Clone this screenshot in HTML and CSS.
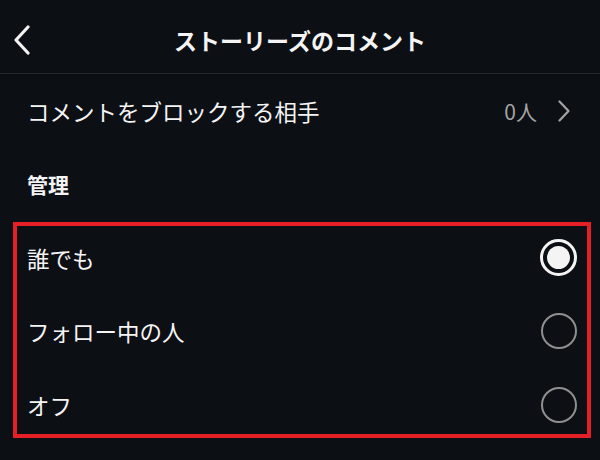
FILE: index.html
```html
<!DOCTYPE html>
<html lang="ja">
<head>
<meta charset="utf-8">
<link rel="stylesheet" href="styles.css">
</head>
<body>
<div class="screen">
  <header class="topbar">
    <span class="back">
      <svg width="20" height="30" viewBox="0 0 20 30"><path d="M16 2 L4 15 L16 28" fill="none" stroke="#f2f2f2" stroke-width="3.2" stroke-linecap="round" stroke-linejoin="round"/></svg>
    </span>
    <h1 class="title">ストーリーズのコメント</h1>
  </header>
  <div class="row">
    <span class="label">コメントをブロックする相手</span>
    <span class="value">0人
      <svg class="chev" width="14" height="22" viewBox="0 0 14 22"><path d="M2.5 1.5 L11.5 11 L2.5 20.5" fill="none" stroke="#a3a3a3" stroke-width="2.2" stroke-linecap="round" stroke-linejoin="round"/></svg>
    </span>
  </div>
  <div class="row section">管理</div>
  <div class="options">
    <div class="row">
      <span class="label">誰でも</span>
      <span class="radio selected"><span class="dot"></span></span>
    </div>
    <div class="row">
      <span class="label">フォロー中の人</span>
      <span class="radio"></span>
    </div>
    <div class="row">
      <span class="label">オフ</span>
      <span class="radio"></span>
    </div>
  </div>
</div>
</body>
</html>
```

FILE: styles.css
```css
html, body {
  margin: 0;
  padding: 0;
  background: #0c0f14;
}
body {
  width: 600px;
  height: 460px;
  overflow: hidden;
  font-family: "Noto Sans CJK JP", "Noto Sans", sans-serif;
  color: #f4f4f4;
}
.topbar {
  height: 73px;
  border-bottom: 1px solid #23262c;
  display: flex;
  align-items: center;
  justify-content: center;
  position: relative;
}
.back {
  position: absolute;
  left: 12px;
  top: 25px;
  display: flex;
}
.title {
  margin: 6px 0 0 0;
  font-size: 23px;
  font-weight: 700;
  letter-spacing: 0;
}
.row {
  height: 73.5px;
  display: flex;
  align-items: center;
  justify-content: space-between;
  padding: 0 22px 0 27px;
  font-size: 22.5px;
}
.label {
  line-height: 1;
}
.value {
  display: flex;
  align-items: center;
  color: #a3a3a3;
  font-size: 21px;
  gap: 20px;
  margin-right: 7px;
}
.section {
  font-weight: 700;
  font-size: 21px;
}
.options {
  position: relative;
}
.options::after {
  content: "";
  position: absolute;
  left: 13px;
  right: 9px;
  top: 1px;
  bottom: 4px;
  border: 4px solid #e41f26;
  pointer-events: none;
}
.radio {
  width: 36px;
  height: 36px;
  box-sizing: border-box;
  border: 2.5px solid #8f8f8f;
  border-radius: 50%;
  display: flex;
  align-items: center;
  justify-content: center;
  margin-right: 1px;
}
.radio.selected {
  width: 37px;
  height: 37px;
  border: 3px solid #f4f4f4;
}
.dot {
  width: 23px;
  height: 23px;
  border-radius: 50%;
  background: #f4f4f4;
}
```
